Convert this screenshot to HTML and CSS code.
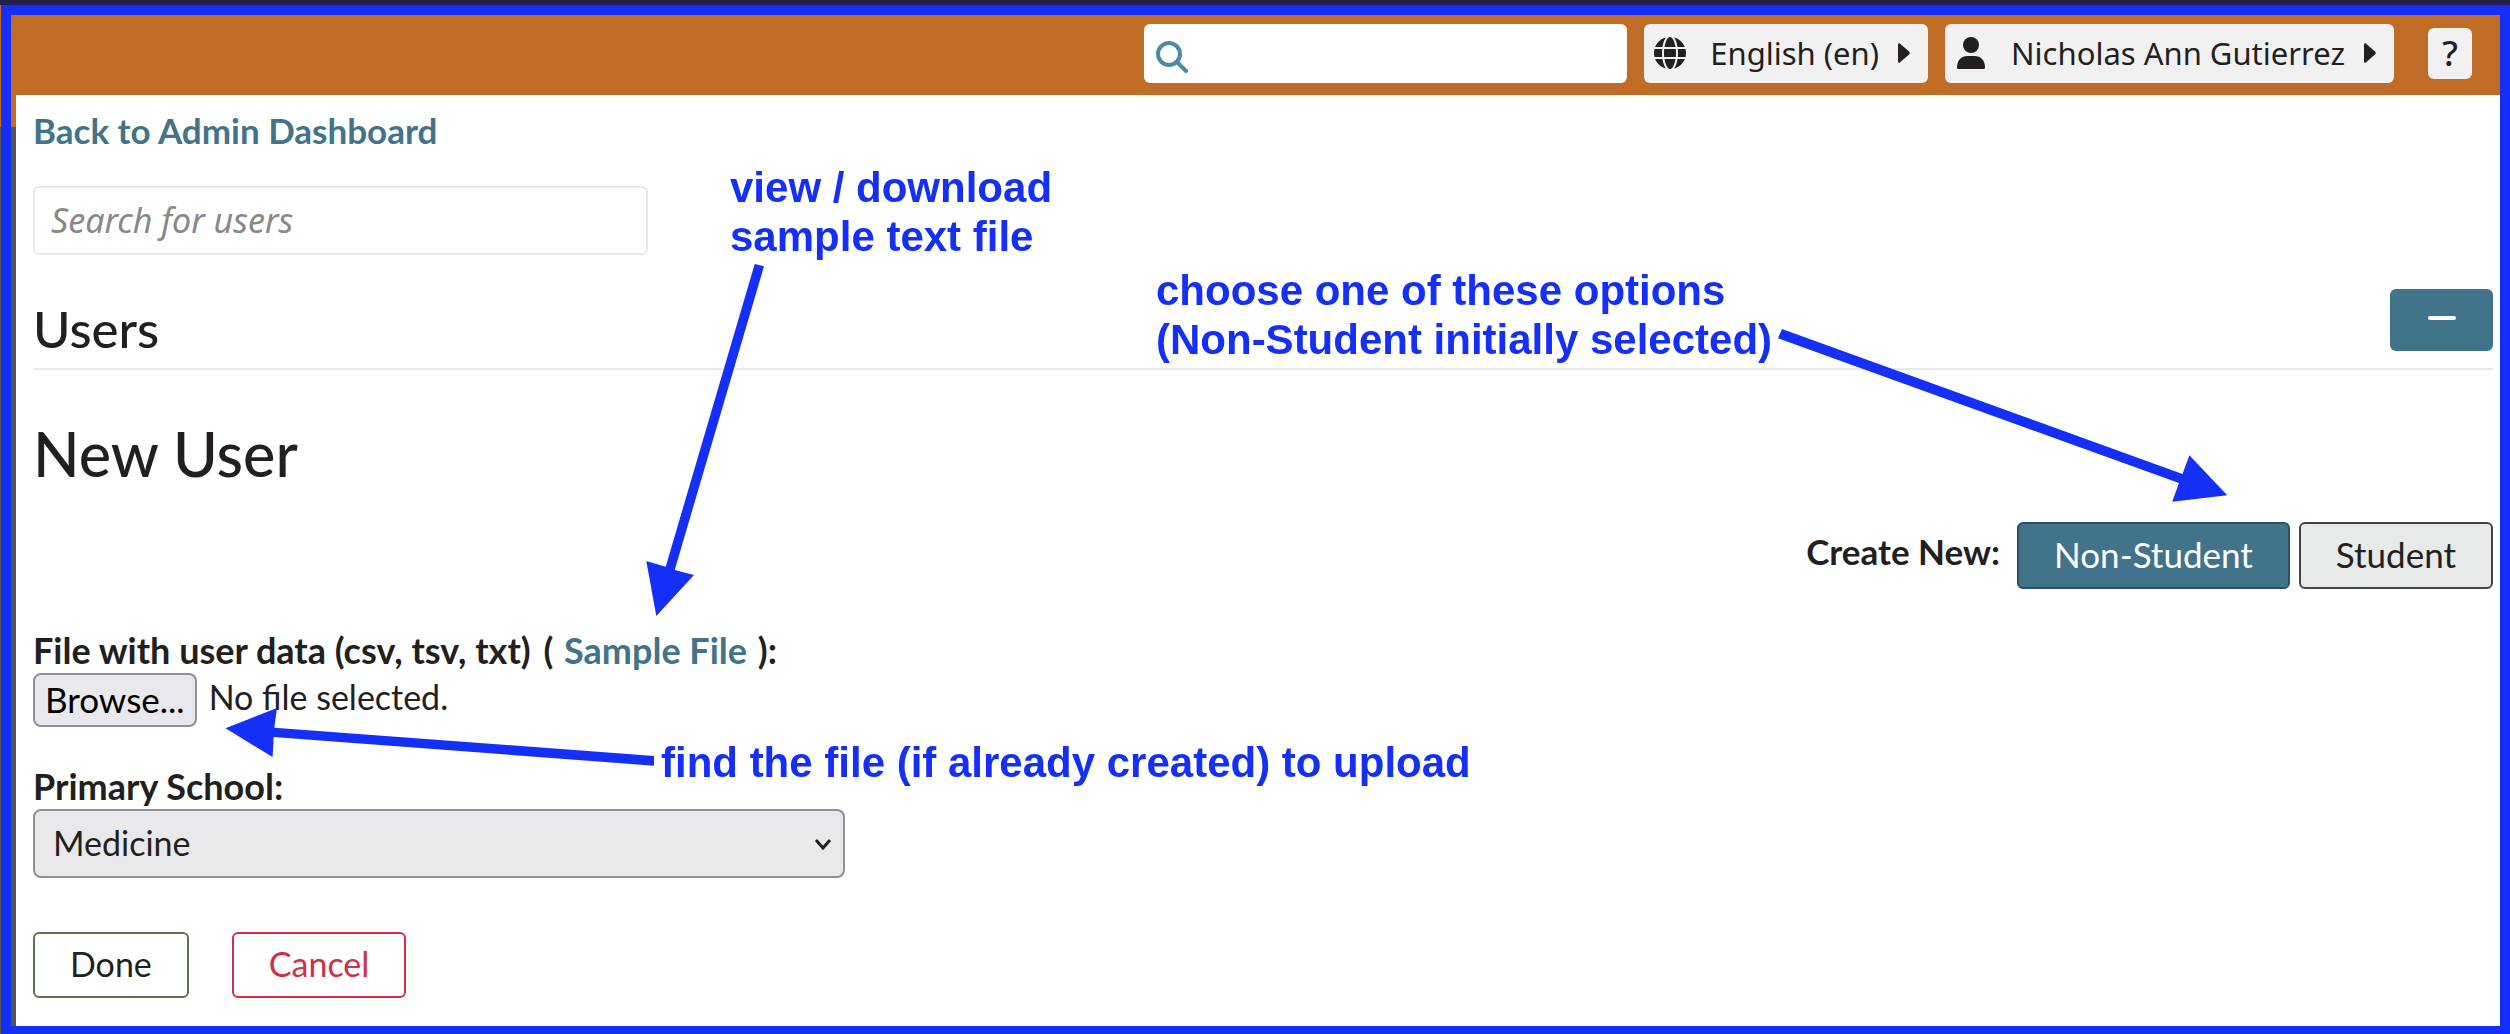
FILE: index.html
```html
<!DOCTYPE html>
<html lang="en">
<head>
<meta charset="utf-8">
<meta name="viewport" content="width=device-width, initial-scale=1">
<title>New User</title>
<link rel="stylesheet" href="styles.css">
</head>
<body>
<div class="top-strip"></div>
<header class="topbar">
  <form class="global-search" role="search">
    <svg class="icon" viewBox="0 0 32 32" aria-hidden="true"><circle cx="13" cy="13" r="11" fill="none" stroke="#4c8aa8" stroke-width="4"/><path d="M21 21l9 9" stroke="#4c8aa8" stroke-width="4" stroke-linecap="round"/></svg>
    <input class="global-search-input" type="search" aria-label="Search">
  </form>
  <button class="menu-button" type="button">
    <svg class="icon" viewBox="0 0 512 512" aria-hidden="true"><path fill="#231f20" d="M352 256c0 22.200-1.200 43.600-3.300 64H163.300c-2.200-20.400-3.300-41.800-3.300-64s1.200-43.600 3.300-64h185.400c2.200 20.400 3.300 41.800 3.300 64zm28.800-64h123.100c5.300 20.500 8.100 41.900 8.100 64s-2.800 43.500-8.100 64H380.800c2.100-20.600 3.200-42 3.200-64s-1.100-43.400-3.200-64zm112.600-32H376.700c-10-63.900-29.800-117.400-55.300-151.600 78.300 20.700 142 77.500 171.900 151.600zm-149.100 0H167.700c6.100-36.400 15.500-68.600 27-94.700 10.500-23.600 22.200-40.700 33.500-51.500C239.400 3.200 248.700 0 256 0s16.600 3.200 27.800 13.800c11.300 10.800 23 27.900 33.500 51.500 11.600 26 20.900 58.200 27 94.700zm-209 0H18.600C48.600 85.900 112.200 29.100 190.600 8.400 165.100 42.600 145.300 96.100 135.300 160zM8.100 192h123.100c-2.100 20.600-3.200 42-3.200 64s1.100 43.400 3.200 64H8.100C2.800 299.500 0 278.100 0 256s2.800-43.500 8.100-64zm186.600 254.600c-11.600-26-20.900-58.200-27-94.600h176.600c-6.100 36.400-15.500 68.600-27 94.600-10.500 23.600-22.200 40.700-33.500 51.500C272.600 508.800 263.300 512 256 512s-16.600-3.200-27.800-13.800c-11.300-10.800-23-27.900-33.500-51.600zM135.300 352c10 63.900 29.800 117.400 55.300 151.600C112.200 482.900 48.600 426.100 18.600 352h116.700zm358.100 0c-30 74.100-93.600 130.900-171.900 151.600 25.500-34.200 45.200-87.700 55.300-151.600h116.600z"/></svg>
    <span>English (en)</span>
    <svg class="caret" viewBox="0 0 12 20" aria-hidden="true"><path fill="#231f20" d="M0 1.500Q0 0 1.500 .3L11 8.500Q12.500 10 11 11.500L1.500 19.700Q0 20 0 18.500z"/></svg>
  </button>
  <button class="menu-button" type="button">
    <svg class="icon" viewBox="0 0 32 32" aria-hidden="true"><circle cx="16" cy="8" r="8" fill="#231f20"/><path fill="#231f20" d="M2 30.500C2 23.500 6 19 12.500 19h7C26 19 30 23.500 30 30.500Q30 32 28.500 32h-25Q2 32 2 30.500z"/></svg>
    <span>Nicholas Ann Gutierrez</span>
    <svg class="caret" viewBox="0 0 12 20" aria-hidden="true"><path fill="#231f20" d="M0 1.500Q0 0 1.500 .3L11 8.500Q12.500 10 11 11.500L1.500 19.700Q0 20 0 18.500z"/></svg>
  </button>
  <button class="help-button" type="button" aria-label="Help">?</button>
</header>
<div class="shell">
  <div class="rail"></div>
  <main class="content">
    <a class="link back-link" href="#">Back to Admin Dashboard</a>
    <input class="user-search" type="text" placeholder="Search for users" aria-label="Search for users">
    <div class="section-head">
      <h2 class="section-title">Users</h2>
      <button class="collapse-button" type="button" aria-label="Collapse"><span class="minus"></span></button>
    </div>
    <h1 class="page-title">New User</h1>
    <div class="create-row">
      <span class="create-label">Create New:</span>
      <button class="toggle toggle-active" type="button">Non-Student</button>
      <button class="toggle" type="button">Student</button>
    </div>
    <form class="user-form">
      <div class="field">
        <div class="field-label"><label for="user-file">File with user data (csv, tsv, txt)</label> <span class="sample">( <a class="link" href="#">Sample File</a> ):</span></div>
        <div class="file-picker">
          <input class="file-input" id="user-file" type="file" accept=".csv,.tsv,.txt">
          <span class="browse">Browse...</span>
          <span>No file selected.</span>
        </div>
      </div>
      <div class="field">
        <label class="field-label" for="school">Primary School:</label>
        <div class="select-wrap">
          <select class="select" id="school"><option>Medicine</option></select>
          <svg class="chevron" viewBox="0 0 18 12" aria-hidden="true"><path d="M2 2l7 8 7-8" fill="none" stroke="#231f20" stroke-width="3"/></svg>
        </div>
      </div>
      <div class="actions">
        <button class="action done" type="button">Done</button>
        <button class="action cancel" type="button">Cancel</button>
      </div>
    </form>
  </main>
</div>
<div class="frame"></div>
<svg class="arrows" width="2510" height="1034" viewBox="0 0 2510 1034" aria-hidden="true">
  <path d="M754.700 264L764 266.300 674.700 570 694 575 656.300 616 646.300 561 665.700 566.700z"/>
  <path d="M1782 329L2182.500 474 2189.400 455.300 2227.200 495.300 2172.200 501.700 2179 483 1778 338.300z"/>
  <path d="M654 756L274.300 727.700 277 708 225.500 728.300 272.600 757 273.700 737 654 765.700z"/>
</svg>
<p class="note note-sample">view / download<br>sample text file</p>
<p class="note note-options">choose one of these options<br>(Non-Student initially selected)</p>
<p class="note note-upload">find the file (if already created) to upload</p>
</body>
</html>
```
FILE: styles.css
```css
* { box-sizing: border-box; }

body {
  margin: 0;
  position: relative;
  min-height: 100vh;
  display: flex;
  flex-direction: column;
  background: #fff;
  color: #231f20;
  font-family: Lato, "Open Sans", sans-serif;
  font-size: 35px;
  line-height: 48px;
}

button, input, select { font: inherit; color: inherit; }
button { cursor: pointer; }
h1, h2, p { margin: 0; }

.top-strip { height: 5px; background: #251d4a; }

.topbar {
  display: flex;
  justify-content: flex-end;
  align-items: center;
  height: 90px;
  padding: 7px 38px 0 16px;
  background: #bf6c26;
  font-family: "Noto Sans", sans-serif;
  font-size: 31px;
}

.icon { width: 32px; height: 32px; flex: none; }
.caret { width: 12px; height: 20px; flex: none; }

.global-search {
  display: flex;
  align-items: center;
  gap: 8px;
  width: 483px;
  height: 59px;
  margin-right: 17px;
  padding: 6px 12px 0;
  border-radius: 6px;
  background: #fff;
}
.global-search-input { flex: 1; min-width: 0; border: 0; background: none; outline: 0; }

.menu-button {
  display: flex;
  align-items: center;
  height: 59px;
  margin-right: 17px;
  padding: 0 18px 2px 10px;
  border: 0;
  border-radius: 6px;
  background: #f1f1f2;
}
.menu-button span { margin: 0 19px 0 24px; }

.help-button {
  width: 44px;
  height: 51px;
  margin-left: 17px;
  padding: 0 0 2px;
  border: 0;
  border-radius: 6px;
  background: #f1f1f2;
  font-size: 35px;
  font-weight: 500;
}

.shell { flex: 1; display: flex; }
.rail { width: 16px; background: linear-gradient(#bf6c26 32px, #555 32px); }

.content {
  flex: 1;
  min-width: 0;
  display: flex;
  flex-direction: column;
  padding: 11px 17px 36px;
}

.link { color: #41738a; font-weight: 700; text-decoration: none; }
.back-link { align-self: flex-start; }

.user-search {
  width: 615px;
  height: 69px;
  margin-top: 32px;
  padding: 0 16px 2px;
  border: 2px solid #e6ebea;
  border-radius: 6px;
  background: #fff;
  font-family: "Noto Sans", sans-serif;
  font-size: 34px;
}
.user-search::placeholder { color: #888; font-style: italic; opacity: 1; }

.section-head {
  display: flex;
  justify-content: space-between;
  align-items: flex-start;
  margin-top: 34px;
  padding-bottom: 15px;
  border-bottom: 2px solid #e6ebea;
}
.section-title {
  padding-top: 16px;
  font-size: 51px;
  line-height: 48px;
  font-weight: 500;
}
.collapse-button {
  display: flex;
  justify-content: center;
  width: 103px;
  height: 62px;
  padding: 27px 0 0;
  border: 0;
  border-radius: 6px;
  background: #41738a;
}
.minus { width: 28px; height: 4px; border-radius: 2px; background: #fff; }

.page-title {
  margin-top: 48px;
  font-size: 61px;
  line-height: 72px;
  font-weight: 500;
}

.create-row { display: flex; justify-content: flex-end; margin-top: 32px; }
.create-label { padding: 5px 17px 0 0; font-weight: 700; }
.toggle {
  height: 67px;
  padding: 0 35px 3px;
  border: 2px solid #444;
  border-radius: 6px;
  background: #e6ebea;
}
.toggle-active { margin-right: 9px; border-color: #2b5262; background: #41738a; color: #fff; }

.user-form { margin-top: 38px; }
.field { margin-bottom: 36px; }
.field-label { display: block; font-size: 36px; line-height: 46px; font-weight: 700; }
.sample { margin-left: 4px; }
.sample .link { margin: 0 2px; }

.file-picker { position: relative; display: flex; width: fit-content; gap: 12px; font-size: 34px; }
.file-input { position: absolute; inset: 0; width: 100%; opacity: 0; }
.browse {
  height: 54px;
  padding: 0 10px;
  border: 2px solid #8f8f9d;
  border-radius: 8px;
  background: #e9e9ed;
  color: #000;
  font-size: 35px;
}

.select-wrap { position: relative; width: 812px; }
.select {
  display: block;
  width: 100%;
  height: 69px;
  padding: 0 18px 2px;
  appearance: none;
  border: 2px solid #8f8f9d;
  border-radius: 8px;
  background: #e9e9eb;
  font-size: 34px;
}
.chevron { position: absolute; right: 13px; top: 29px; width: 18px; height: 12px; pointer-events: none; }

.actions { display: flex; gap: 43px; margin-top: 54px; }
.action {
  height: 66px;
  padding: 0 35px 3px;
  border: 2px solid;
  border-radius: 6px;
  background: #fff;
  font-size: 34px;
}
.done { border-color: #5b744b; }
.cancel { border-color: #cd3048; color: #cd3048; }

.frame {
  position: absolute;
  inset: 5px 0 0 1px;
  border: solid #142ff7;
  border-width: 10px 10px 8px;
  pointer-events: none;
}
.arrows { position: absolute; left: 0; top: 0; fill: #142ff7; pointer-events: none; }
.note {
  position: absolute;
  color: #142ff7;
  font: bold 42px/49px "Liberation Sans", Arial, sans-serif;
  white-space: nowrap;
}
.note-sample { left: 730px; top: 163px; }
.note-options { left: 1156px; top: 266px; }
.note-upload { left: 661px; top: 738px; }
```
